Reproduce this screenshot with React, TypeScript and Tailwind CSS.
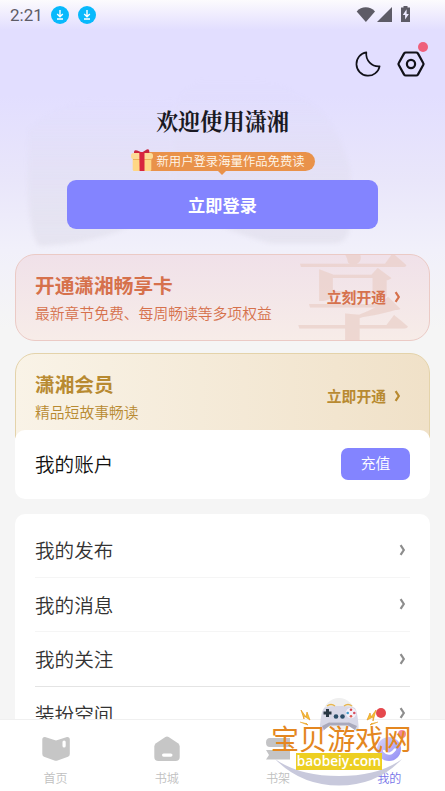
import type { ReactNode } from 'react'

const MENU_ITEMS = ['我的发布', '我的消息', '我的关注', '装扮空间']

function Chevron({ className }: { className?: string }) {
  return (
    <svg width="7" height="12" viewBox="0 0 7 12" fill="none" className={className}>
      <path d="M1.6 1.2 4.8 6 1.6 10.8" stroke="currentColor" strokeWidth="2.2" />
    </svg>
  )
}

function DownloadBadge() {
  return (
    <svg width="18" height="18" viewBox="0 0 18 18" fill="none">
      <circle cx="9" cy="9" r="9" fill="#08b9fc" />
      <path d="M9 4v6.5M6.2 8 9 10.8 11.8 8M6 13h6" stroke="#fff" strokeWidth="1.4" />
    </svg>
  )
}

function StatusBar() {
  return (
    <div className="flex h-[30px] shrink-0 items-center pl-2.5 pr-[33px] text-[#5d5b66]">
      <span className="w-[41px] font-['Roboto'] text-[17px] leading-[30px]">2:21</span>
      <div className="flex gap-[9px]">
        <DownloadBadge />
        <DownloadBadge />
      </div>
      <svg width="56" height="18" viewBox="0 0 56 18" className="ml-auto" fill="currentColor">
        <path d="M0.7 5.4C5.5-.2 14-.2 19 5.4L9.9 16Z" />
        <path d="M36 1v15H21Z" />
        <path d="M47.5 0h4v1.5H54V16h-9V1.5h2.5Z" />
        <path d="M50.6 3.2 46.8 9h2.3v4.5L52.9 8h-2.3Z" fill="#eeebff" />
      </svg>
    </div>
  )
}

function Toolbar() {
  return (
    <div className="flex h-[68px] shrink-0 items-center justify-end gap-4 pr-[20px] text-[#111118]">
      <svg width="26" height="26" viewBox="0 0 26 26" fill="none" stroke="currentColor" strokeWidth="1.7" strokeLinejoin="round">
        <path d="M11.3 1.4A11.7 11.7 0 1 0 24.6 15.3C16.8 15.9 10.4 9.4 11.3 1.4Z" />
      </svg>
      <div className="relative">
        <svg width="28" height="26" viewBox="0 0 28 26" fill="none" stroke="currentColor" strokeWidth="2.2" strokeLinejoin="round">
          <path d="M8.8 1.5H19.2Q20.3 1.5 20.9 2.4L26.2 12Q26.8 13 26.2 14L20.9 23.6Q20.3 24.5 19.2 24.5H8.8Q7.7 24.5 7.1 23.6L1.8 14Q1.2 13 1.8 12L7.1 2.4Q7.7 1.5 8.8 1.5Z" />
          <circle cx="14" cy="13" r="4.1" />
        </svg>
        <span className="absolute -top-[9px] left-[21px] size-2.5 rounded-full bg-[#ef607b]" />
      </div>
    </div>
  )
}

function GiftIcon() {
  return (
    <svg width="22" height="22" viewBox="0 0 22 22" className="absolute -top-[3px] left-0">
      <path d="M3 3Q3 .3 6.2 1.6L11 3.6 15.7.5Q18.7-.4 18.3 3L18 5H3Z" fill="#c9253d" />
      <path d="M1.7 9h18.6v11.5Q20.3 22 18.8 22H3.2Q1.7 22 1.7 20.5Z" fill="#ffd785" />
      <rect y="4" width="22" height="6" rx="2.5" fill="#fddc96" />
      <path d="M2 10h18v1H2Z" fill="#eeb257" />
      <path d="M8.3 3h5.2v19H8.6Z" fill="#d8253f" />
    </svg>
  )
}

// faint open-book shape behind the login block
function Backdrop() {
  return (
    <svg width="445" height="320" viewBox="0 0 445 320" className="absolute left-0 top-0 blur-[2px]">
      <defs>
        <linearGradient id="haze" x1="0" y1="0" x2="0" y2="1">
          <stop offset="0" stopColor="#d7d5ea" stopOpacity="0" />
          <stop offset="1" stopColor="#d6d4e1" stopOpacity=".65" />
        </linearGradient>
      </defs>
      <path d="M28 130Q70 85 174 100V200L122 230Q90 243 40 246 30 240 28 190Z" fill="url(#haze)" opacity=".6" />
      <path d="M218 76Q330 75 350 170V225Q348 243 335 243H270Q200 225 174 190V130Q170 80 218 76Z" fill="url(#haze)" opacity=".6" />
    </svg>
  )
}

function Welcome() {
  return (
    <div className="flex shrink-0 flex-col items-center">
      <h1 className="mt-[5px] font-['Noto_Serif_CJK_SC','Noto_Sans_CJK_SC',serif] text-[22.2px] font-bold leading-[34px] text-[#1a1923]">
        欢迎使用潇湘
      </h1>
      <div className="relative mt-[15px] h-[19px] w-[184px]">
        <div className="ml-[10px] h-full rounded-r-full bg-[#e9924a] pl-4 text-[12.35px] font-[350] leading-[19px] text-[#fff8ed]">
          新用户登录海量作品免费读
        </div>
        <GiftIcon />
        <svg width="8" height="4" viewBox="0 0 8 4" className="absolute left-[87px] top-[19px]">
          <path d="M0 0h8L4 4Z" fill="#e9924a" />
        </svg>
      </div>
      <button className="mt-[9px] h-[49px] w-[311px] rounded-[9px] bg-[#8384ff] text-[17.2px] font-bold text-white">
        立即登录
      </button>
    </div>
  )
}

interface PromoProps {
  title: string
  subtitle: string
  action: string
  className: string
  children?: ReactNode
}

function PromoCard({ title, subtitle, action, className, children }: PromoProps) {
  return (
    <div className={`relative flex shrink-0 items-start justify-between overflow-hidden border pl-[19px] pr-[28px] ${className}`}>
      {children}
      <div className="relative pt-4">
        <div className="text-[19.7px] font-bold leading-[28px]">{title}</div>
        <div className="text-[14.8px] font-[350] leading-[28px]">{subtitle}</div>
      </div>
      <div className="relative flex h-[84px] items-center gap-[8px] text-[14.8px] font-bold">
        {action}
        <Chevron />
      </div>
    </div>
  )
}

function AccountCard() {
  return (
    <div className="relative -mt-2 flex h-[69px] shrink-0 items-center justify-between rounded-[10px] bg-white px-5 pb-0.5">
      <span className="text-[19.6px] font-[350] text-[#111]">我的账户</span>
      <button className="h-8 w-[69px] rounded-[7px] bg-[#8384ff] text-[14.8px] font-[350] text-white">充值</button>
    </div>
  )
}

function MenuList() {
  return (
    <div className="mt-[15px] shrink-0 rounded-[10px] bg-white px-5 pt-[9px]">
      {MENU_ITEMS.map((item, i) => (
        <div
          key={item}
          className={`flex h-[54.5px] items-center justify-between border-b pr-1 ${i === 2 ? 'border-[#e4e4e4]' : 'border-[#f5f5f5]'}`}
        >
          <span className="text-[19.6px] font-[350] text-[#333]">{item}</span>
          <span className="relative">
            {i === 3 && <span className="absolute -left-[23px] top-[1px] size-2.5 rounded-full bg-[#e5484d]" />}
            <Chevron className="text-[#8d8d8d]" />
          </span>
        </div>
      ))}
    </div>
  )
}

function TabBar() {
  return (
    <nav className="grid h-[72px] shrink-0 grid-cols-4 border-t border-[#f0f0f0] bg-white text-[12.1px] font-[350] leading-[18px] text-[#bfbfbf]">
      <div className="flex flex-col items-center gap-[7px] pt-[16px]">
        <svg width="30" height="26" viewBox="0 0 30 26" fill="#c6c6c6">
          <path d="M4 1 15 4.5 26 1Q28.8.8 28.8 3.6V18Q28.8 20 27 20.7L16.6 24.4Q15 25 13.4 24.4L3 20.7Q1.3 20 1.3 18V3.6Q1.3.8 4 1Z" />
          <rect x="21.5" y="4.5" width="3.2" height="7" rx="1.6" fill="#fff" />
        </svg>
        首页
      </div>
      <div className="flex flex-col items-center gap-[7px] pt-[16px]">
        <svg width="28" height="26" viewBox="0 0 28 26" fill="#c6c6c6">
          <path d="M12.4.9Q14-.1 15.6.9L25 7.3Q26.7 8.5 26.7 10.5V21Q26.7 25 22.5 25H5.5Q1.3 25 1.3 21V10.5Q1.3 8.5 3 7.3Z" />
          <rect x="9" y="17.5" width="10.5" height="3.2" rx="1.6" fill="#fff" />
        </svg>
        书城
      </div>
      <div className="flex flex-col items-center gap-[7px] pt-[16px]">
        <svg width="26" height="26" viewBox="0 0 26 26" fill="#c4c4c6">
          <path d="M5 2H25V11H5Q1 11 1 6.5T5 2ZM1 14H25V23.5H1L4 19Z" />
        </svg>
        书架
      </div>
      <div className="flex flex-col items-center gap-[7px] pt-[16px] text-[#7773e8]">
        <div className="relative">
          <svg width="26" height="26" viewBox="0 0 26 26">
            <defs>
              <linearGradient id="face" x1="0" y1="0" x2="1" y2="1">
                <stop offset="0" stopColor="#d9d6fc" />
                <stop offset="1" stopColor="#8f8bf4" />
              </linearGradient>
            </defs>
            <circle cx="13" cy="13" r="12" fill="url(#face)" />
            <path d="M8 15q5.500 6 11-1.500" stroke="#fff" strokeWidth="2.4" strokeLinecap="round" fill="none" />
          </svg>
          <span className="absolute -top-1.5 left-[22px] size-2 rounded-full bg-[#f08aa0]" />
        </div>
        我的
      </div>
    </nav>
  )
}

function SiteStamp() {
  return (
    <div className="absolute left-[269px] top-[696px] h-[91px] w-[144px]">
      <svg width="144" height="91" viewBox="0 0 144 91" className="absolute left-0 top-0">
        <circle cx="70" cy="18" r="16" fill="#efefef" />
        <path d="M6 63Q32 89.500 70 89.500T133 63Q110 80 70 80T6 63Z" fill="#c8c9dc" />
        <path d="M55 12Q59 9.500 70 10 82 9.500 86 12 88.500 16 89.500 29 90 39 86 34L79 26.500H61L55 34Q50.500 39 51 29 52 16 55 12Z" fill="#d8d8e7" />
        <path d="M53 30 60 26.500H80L88 30 86 34 79 29.500H61L55 34Z" fill="#a9a9bc" />
        <path d="M58 10q4-3 8 0M75 10q4-3 8 0" stroke="#e7b54d" strokeWidth="1.5" fill="none" />
        <path d="M54.500 17h8M58.500 13v8" stroke="#293743" strokeWidth="3" />
        <circle cx="67" cy="20.500" r="2.300" fill="#2b4e69" />
        <circle cx="73.500" cy="20.500" r="2.300" fill="#2b4e69" />
        <circle cx="82" cy="17" r="5.200" fill="#f3f2fa" />
        <circle cx="82" cy="13.700" r="1.300" fill="#d8484b" />
        <circle cx="82" cy="20.300" r="1.300" fill="#df5c50" />
        <circle cx="78.700" cy="17" r="1.300" fill="#469dcc" />
        <circle cx="85.300" cy="17" r="1.300" fill="#d84e61" />
        <path d="m32 14 5 7 1-5 3 8-6-4v3ZM31 26l8 3-2-2M107 14l-5 7-1-4-3 7 6-3v4ZM109 26l-8 3 2-2" fill="#f4c232" stroke="#e69824" strokeWidth=".7" />
      </svg>
      <div className="absolute left-[2px] top-[24px] whitespace-nowrap text-[28.1px] leading-[36px] text-[#e48720]">宝贝游戏网</div>
      <div className="absolute left-[27px] top-[57px] h-[17px] w-[86px] bg-[#edcf22] text-center font-['Open_Sans'] text-[13.7px] font-semibold leading-[15px] text-white">
        baobeiy.com
      </div>
    </div>
  )
}

export default function App() {
  return (
    <div className="relative flex h-[791px] w-[445px] flex-col overflow-hidden bg-[#f5f5f5] font-['Noto_Sans_CJK_SC',sans-serif]">
      <main className="relative flex h-[719px] shrink-0 flex-col overflow-hidden bg-[linear-gradient(180deg,#fcfbfd_0px,#f0edfe_14px,#e2deff_30px,#e2deff_95px,#e9e6fa_180px,#f1f0fa_250px,#f5f5f5_330px)]">
        <Backdrop />
        <div className="relative flex flex-col">
          <StatusBar />
          <Toolbar />
          <Welcome />
          <div className="flex flex-col px-[15px] pt-[25px]">
            <PromoCard
              title="开通潇湘畅享卡"
              subtitle="最新章节免费、每周畅读等多项权益"
              action="立刻开通"
              className="h-[87px] rounded-[20px] border-[#ebcac5] bg-linear-to-b from-[#f0e1e9] to-[#f7ece8] text-[#d6714c]"
            >
              <span className="absolute -top-[19px] right-[18px] font-['Noto_Serif_CJK_SC','Noto_Sans_CJK_SC',serif] text-[116px] font-bold leading-[120px] text-[#eacfc8]/70">
                享
              </span>
            </PromoCard>
            <PromoCard
              title="潇湘会员"
              subtitle="精品短故事畅读"
              action="立即开通"
              className="mt-3 h-[85px] rounded-t-[20px] border-[#e4d3aa] bg-linear-to-r from-[#f9f3e7] to-[#f0e1c8] text-[#b88a31]"
            />
            <AccountCard />
            <MenuList />
          </div>
        </div>
      </main>
      <TabBar />
      <SiteStamp />
    </div>
  )
}
